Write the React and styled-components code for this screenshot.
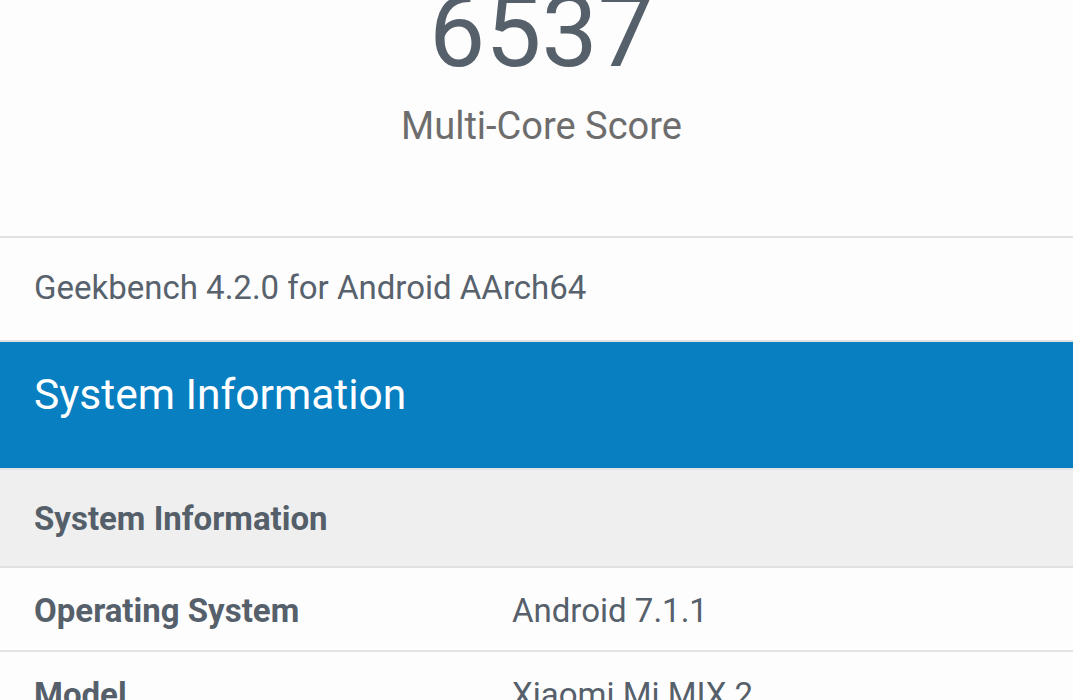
import React from 'react'
import styled, { createGlobalStyle } from 'styled-components'

const GlobalStyle = createGlobalStyle`
  html, body {
    margin: 0;
    padding: 0;
    background: #fdfdfd;
    font-family: Roboto, "Noto Sans", "Liberation Sans", sans-serif;
    overflow: hidden;
  }
`

const Page = styled.div`
  width: 1073px;
  height: 700px;
  overflow: hidden;
  background: #fdfdfd;
`

const ScoreBlock = styled.div`
  display: flex;
  flex-direction: column;
  align-items: center;
  margin-top: -18px;
  padding: 0 0 86px 10px;
  border-bottom: 2px solid #e1e1e1;
`

const ScoreValue = styled.div`
  font-size: 100px;
  line-height: 1;
  color: #55606b;
`

const ScoreLabel = styled.div`
  margin-top: 22px;
  font-size: 38px;
  line-height: 1.2;
  color: #6d6d6d;
`

const VersionRow = styled.div`
  padding: 30px 34px 33px;
  font-size: 33px;
  line-height: 1.2;
  color: #58626d;
  border-bottom: 2px solid #e1e1e1;
`

const SectionHeader = styled.h2`
  margin: 0;
  padding: 27px 34px 48px;
  background: #077fc1;
  color: #ffffff;
  font-size: 42.5px;
  font-weight: 400;
  line-height: 1.2;
`

const Table = styled.div`
  display: grid;
  grid-template-columns: 512px 1fr;
`

const GroupHeader = styled.div`
  grid-column: 1 / -1;
  padding: 29px 34px 27px;
  background: #efefef;
  border-top: 2px solid #e4e4e4;
  border-bottom: 2px solid #e1e1e1;
  font-size: 33px;
  font-weight: 700;
  line-height: 1.2;
  color: #555f6a;
`

const Cell = styled.div`
  padding: 23px 0 20px ${p => (p.$label ? '34px' : '0')};
  font-size: 33px;
  font-weight: ${p => (p.$label ? 700 : 400)};
  line-height: 1.2;
  color: #56606b;
  border-bottom: 2px solid #e4e4e4;
`

const rows = [
  ['Operating System', 'Android 7.1.1'],
  ['Model', 'Xiaomi Mi MIX 2'],
  ['Processor', 'Qualcomm Snapdragon 835'],
]

export default function App() {
  return (
    <Page>
      <GlobalStyle />
      <ScoreBlock>
        <ScoreValue>6537</ScoreValue>
        <ScoreLabel>Multi-Core Score</ScoreLabel>
      </ScoreBlock>
      <VersionRow>Geekbench 4.2.0 for Android AArch64</VersionRow>
      <SectionHeader>System Information</SectionHeader>
      <Table>
        <GroupHeader>System Information</GroupHeader>
        {rows.map(([label, value]) => (
          <React.Fragment key={label}>
            <Cell $label>{label}</Cell>
            <Cell>{value}</Cell>
          </React.Fragment>
        ))}
      </Table>
    </Page>
  )
}
